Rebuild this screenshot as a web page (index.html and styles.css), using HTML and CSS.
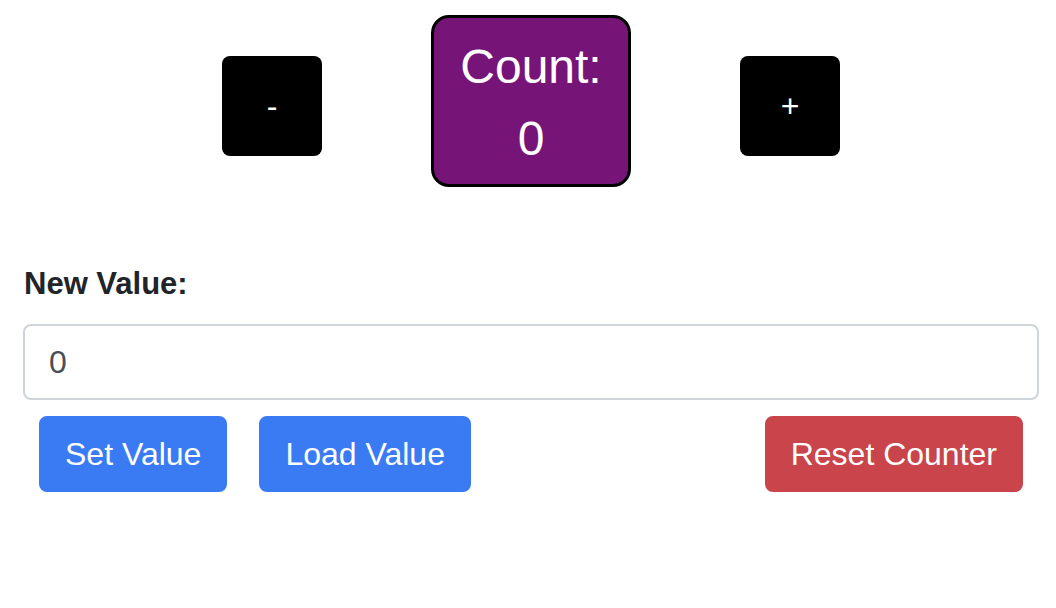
FILE: index.html
```html
<!DOCTYPE html>
<html lang="en">
<head>
<meta charset="utf-8">
<title>Counter</title>
<link rel="stylesheet" href="styles.css">
</head>
<body>
<div class="page">
  <div class="counter-row">
    <button class="step-btn">-</button>
    <div class="count-box">Count:<br>0</div>
    <button class="step-btn">+</button>
  </div>
  <form class="value-form">
    <label class="field-label" for="newValue">New Value:</label>
    <input class="field-input" id="newValue" type="text" value="0">
    <div class="actions">
      <button type="button" class="btn btn-primary">Set Value</button>
      <button type="button" class="btn btn-primary">Load Value</button>
      <button type="button" class="btn btn-danger btn-right">Reset Counter</button>
    </div>
  </form>
</div>
</body>
</html>
```
FILE: styles.css
```css
* { box-sizing: border-box; }
html, body { margin: 0; background: #fff; }
body {
  font-family: "Liberation Sans", Arial, Helvetica, sans-serif;
  color: #212529;
}
.page {
  padding: 15px 17px 0 23px;
}
.counter-row {
  display: flex;
  justify-content: center;
  align-items: flex-start;
  gap: 109px;
}
.step-btn {
  width: 100px;
  height: 100px;
  margin-top: 41px;
  background: #000;
  color: #fff;
  border: none;
  border-radius: 8px;
  font-family: "Liberation Sans", Arial, sans-serif;
  font-size: 32px;
  padding: 0;
}
.count-box {
  width: 200px;
  border: 3px solid #000;
  border-radius: 18px;
  background: #761477;
  color: #fff;
  font-size: 48px;
  line-height: 72px;
  padding: 13px 0 9px;
  text-align: center;
}
.value-form {
  margin-top: 73px;
}
.field-label {
  display: block;
  font-weight: bold;
  font-size: 31px;
  line-height: 48px;
  margin-bottom: 16px;
  padding-left: 1px;
}
.field-input {
  display: block;
  width: 100%;
  height: 76px;
  padding: 12px 24px;
  font-family: "Liberation Sans", Arial, sans-serif;
  font-size: 32px;
  color: #495057;
  border: 2px solid #ced4da;
  border-radius: 8px;
  outline: none;
}
.actions {
  display: flex;
  gap: 32px;
  margin-top: 16px;
  padding: 0 16px;
}
.btn {
  height: 76px;
  padding: 12px 24px;
  font-family: "Liberation Sans", Arial, sans-serif;
  font-size: 32px;
  line-height: 48px;
  color: #fff;
  border: 2px solid transparent;
  border-radius: 8px;
}
.btn-primary {
  background: #3a7bf3;
  border-color: #3a7bf3;
}
.btn-danger {
  background: #c9444b;
  border-color: #c9444b;
}
.btn-right {
  margin-left: auto;
}
```
